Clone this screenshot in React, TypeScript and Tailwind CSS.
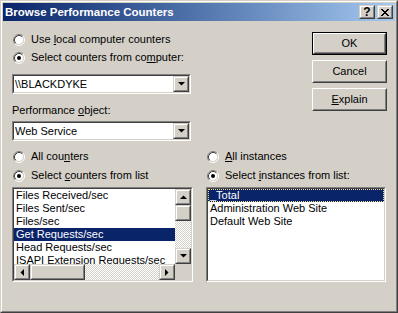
import React from 'react';

// Win2000 style bevels
function Raised({ className = '', children }: { className?: string; children?: React.ReactNode }) {
    return (
        <div className={`border border-t-[#d4d0c8] border-l-[#d4d0c8] border-r-[#404040] border-b-[#404040] ${className}`}>
            <div className="flex h-full w-full items-center justify-center border border-t-white border-l-white border-r-[#808080] border-b-[#808080] bg-[#d4d0c8]">
                {children}
            </div>
        </div>
    );
}

function PushButton({ label, def = false }: { label: React.ReactNode; def?: boolean }) {
    const inner = (
        <div className="h-full w-full border border-t-white border-l-white border-r-[#404040] border-b-[#404040]">
            <div className="flex h-full w-full items-center justify-center border border-t-[#d4d0c8] border-l-[#d4d0c8] border-r-[#808080] border-b-[#808080] bg-[#d4d0c8]">
                {label}
            </div>
        </div>
    );
    return <div className={`h-[23px] w-[75px] ${def ? 'border border-black' : ''}`}>{inner}</div>;
}

function Sunken({ className = '', children }: { className?: string; children?: React.ReactNode }) {
    return (
        <div className={`border border-t-[#808080] border-l-[#808080] border-r-white border-b-white ${className}`}>
            <div className="h-full w-full overflow-hidden border border-t-[#404040] border-l-[#404040] border-r-[#d4d0c8] border-b-[#d4d0c8] bg-white">
                {children}
            </div>
        </div>
    );
}

function Arrow({ dir }: { dir: 'up' | 'down' | 'left' | 'right' }) {
    const pts = {
        up: '0,4 7,4 3.5,0.5',
        down: '0,0 7,0 3.5,3.5',
        left: '4,0 4,7 0.5,3.5',
        right: '0,0 0,7 3.5,3.5',
    }[dir];
    const vertical = dir === 'up' || dir === 'down';
    return (
        <svg width={vertical ? 7 : 4} height={vertical ? 4 : 7} viewBox={vertical ? '0 0 7 4' : '0 0 4 7'}>
            <polygon points={pts} fill="#000" />
        </svg>
    );
}

function Radio({ checked = false }: { checked?: boolean }) {
    return (
        <svg width="12" height="12" viewBox="0 0 12 12" className="shrink-0">
            <circle cx="6" cy="6" r="4.5" fill="#fff" />
            <path d="M9.89 2.11 A5.5 5.5 0 0 0 2.11 9.89" stroke="#808080" fill="none" />
            <path d="M9.89 2.11 A5.5 5.5 0 0 1 2.11 9.89" stroke="#fff" fill="none" />
            <path d="M9.18 2.82 A4.5 4.5 0 0 0 2.82 9.18" stroke="#404040" fill="none" />
            <path d="M9.18 2.82 A4.5 4.5 0 0 1 2.82 9.18" stroke="#d4d0c8" fill="none" />
            {checked && <circle cx="6" cy="6" r="2" fill="#000" />}
        </svg>
    );
}

function RadioRow({ checked, children, className = '' }: { checked?: boolean; children: React.ReactNode; className?: string }) {
    return (
        <div className={`flex h-[13px] items-center gap-[6px] pl-px ${className}`}>
            <Radio checked={checked} />
            <span className="whitespace-nowrap">{children}</span>
        </div>
    );
}

function Combo({ value, className = '' }: { value: string; className?: string }) {
    return (
        <Sunken className={`h-[20px] w-[179px] ${className}`}>
            <div className="flex h-full w-full items-center">
                <span className="flex-1 whitespace-nowrap pl-px">{value}</span>
                <Raised className="h-full w-[16px]">
                    <Arrow dir="down" />
                </Raised>
            </div>
        </Sunken>
    );
}

const U = ({ children }: { children: React.ReactNode }) => <span className="underline underline-offset-[1px]">{children}</span>;

function TitleBar() {
    return (
        <div className="flex h-[18px] items-center bg-gradient-to-r from-[#0a246a] to-[#a6caf0] pl-[2px] pr-[2px]">
            <span className="flex-1 whitespace-nowrap text-[11.5px] font-bold text-white">Browse Performance Counters</span>
            <Raised className="h-[14px] w-[16px]">
                <span className="text-[12px] leading-[12px] font-bold">?</span>
            </Raised>
            <Raised className="ml-[2px] h-[14px] w-[16px]">
                <svg width="8" height="7" viewBox="0 0 8 7" shapeRendering="crispEdges">
                    <path
                        d="M0 0h2v1H0zM6 0h2v1H6zM1 1h2v1H1zM5 1h2v1H5zM2 2h4v1H2zM3 3h2v1H3zM2 4h4v1H2zM1 5h2v1H1zM5 5h2v1H5zM0 6h2v1H0zM6 6h2v1H6z"
                        fill="#000"
                    />
                </svg>
            </Raised>
        </div>
    );
}

const counters = ['Files Received/sec', 'Files Sent/sec', 'Files/sec', 'Get Requests/sec', 'Head Requests/sec', 'ISAPI Extension Requests/sec'];
const instances = ['_Total', 'Administration Web Site', 'Default Web Site'];

const track = 'bg-[image:repeating-conic-gradient(#ffffff_0%_25%,#d4d0c8_0%_50%)] bg-[length:2px_2px]';

export default function App() {
    return (
        <div className="h-[313px] w-[398px] font-['Liberation_Sans',Arial,sans-serif] text-[11px] leading-[13px] text-black">
            <div className="h-full w-full border border-t-[#d4d0c8] border-l-[#d4d0c8] border-r-[#404040] border-b-[#404040]">
                <div className="flex h-full w-full flex-col border border-t-white border-l-white border-r-[#808080] border-b-[#808080] bg-[#d4d0c8] p-px">
                    <TitleBar />

                    <div className="flex flex-col pl-[9px] pr-[8px]">
                        {/* top: computer / object + buttons */}
                        <div className="flex">
                            <div className="flex w-[179px] flex-col pt-[12px]">
                                <RadioRow>
                                    Use <U>l</U>ocal computer counters
                                </RadioRow>
                                <RadioRow checked className="mt-[5px]">
                                    Select counters from co<U>m</U>puter:
                                </RadioRow>
                                <Combo value={'\\\\BLACKDYKE'} className="mt-[10px]" />
                                <div className="mt-[10px] h-[13px] whitespace-nowrap">
                                    Performance <U>o</U>bject:
                                </div>
                                <Combo value="Web Service" className="mt-[4px]" />
                            </div>
                            <div className="ml-auto flex flex-col gap-[5px] pt-[11px]">
                                <PushButton def label="OK" />
                                <PushButton label="Cancel" />
                                <PushButton label={<><U>E</U>xplain</>} />
                            </div>
                        </div>

                        {/* bottom: counters + instances */}
                        <div className="mt-[9px] flex gap-[13px]">
                            <div className="flex w-[181px] flex-col">
                                <RadioRow>
                                    All cou<U>n</U>ters
                                </RadioRow>
                                <RadioRow checked className="mt-[6px]">
                                    Select <U>c</U>ounters from list
                                </RadioRow>
                                <Sunken className="mt-[5px] h-[95px] w-[181px]">
                                    <div className="flex h-full w-full flex-col">
                                        <div className="flex h-[75px]">
                                            <div className="flex-1 overflow-hidden">
                                                {counters.map((c, i) => (
                                                    <div
                                                        key={c}
                                                        className={`h-[13px] whitespace-nowrap pl-[2px] ${i === 3 ? 'bg-[#0a246a] text-white' : ''}`}
                                                    >
                                                        {c}
                                                    </div>
                                                ))}
                                            </div>
                                            <div className="flex w-[16px] flex-col">
                                                <Raised className="h-[16px] w-[16px]">
                                                    <Arrow dir="up" />
                                                </Raised>
                                                <Raised className="h-[16px] w-[16px]" />
                                                <div className={`flex-1 ${track}`} />
                                                <Raised className="h-[16px] w-[16px]">
                                                    <Arrow dir="down" />
                                                </Raised>
                                            </div>
                                        </div>
                                        <div className="flex h-[16px]">
                                            <Raised className="h-[16px] w-[16px]">
                                                <Arrow dir="left" />
                                            </Raised>
                                            <Raised className="h-[16px] w-[55px]" />
                                            <div className={`flex-1 ${track}`} />
                                            <Raised className="h-[16px] w-[16px]">
                                                <Arrow dir="right" />
                                            </Raised>
                                            <div className="h-[16px] w-[16px] bg-[#d4d0c8]" />
                                        </div>
                                    </div>
                                </Sunken>
                            </div>

                            <div className="flex w-[180px] flex-col">
                                <RadioRow>
                                    <U>A</U>ll instances
                                </RadioRow>
                                <RadioRow checked className="mt-[6px]">
                                    Select <U>i</U>nstances from list:
                                </RadioRow>
                                <Sunken className="mt-[5px] h-[95px] w-[180px]">
                                    {instances.map((n, i) => (
                                        <div
                                            key={n}
                                            className={`h-[13px] whitespace-nowrap ${
                                                i === 0
                                                    ? 'border border-dotted border-[#f5db95] bg-[#0a246a] pl-px leading-[11px] text-white'
                                                    : 'pl-[2px]'
                                            }`}
                                        >
                                            {n}
                                        </div>
                                    ))}
                                </Sunken>
                            </div>
                        </div>
                    </div>
                </div>
            </div>
        </div>
    );
}
